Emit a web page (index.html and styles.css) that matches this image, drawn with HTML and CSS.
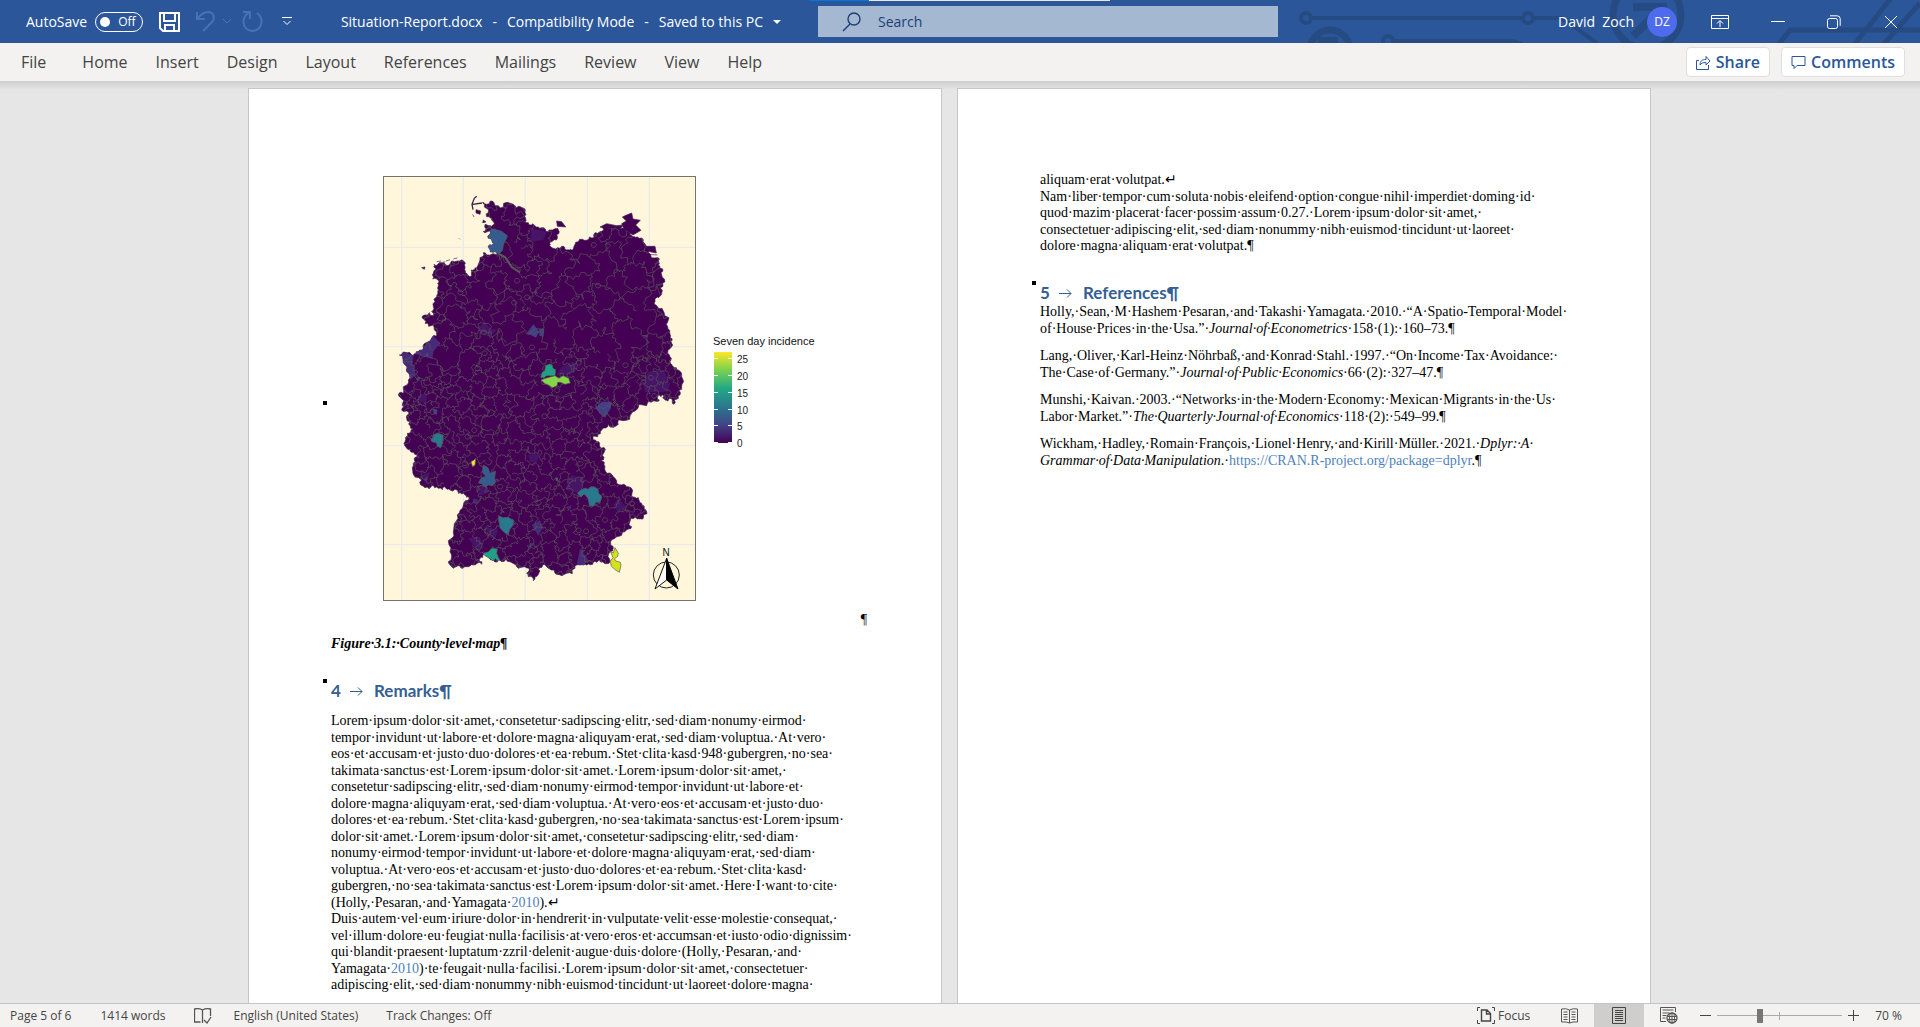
FILE: index.html
```html
<!DOCTYPE html>
<html lang="en">
<head>
<meta charset="utf-8">
<title>Situation-Report.docx</title>
<link rel="stylesheet" href="styles.css">
</head>
<body>
<header class="titlebar">
  <svg class="circuit" width="640" height="43" viewBox="0 0 640 43" fill="none" stroke="#264b82" stroke-width="4" aria-hidden="true">
    <circle cx="26" cy="18" r="5"/><path d="M32 18H242M254 18H282L317 43" /><circle cx="248" cy="18" r="5"/>
    <circle cx="50" cy="50" r="20" stroke-width="7"/><path d="M38 40h20" stroke-width="6"/>
    <circle cx="108" cy="41" r="5"/><path d="M114 41H230q8 0 12 4"/>
    <circle cx="367" cy="15" r="34" stroke-width="7"/><path d="M353 7h30v12M382 8l-29 28" stroke-width="8"/>
    <path d="M498 45l12-15h130M574 45l37-47M603 45l37-42" stroke-width="5"/>
  </svg>
  <div class="quick">
    <label class="autosave">AutoSave <button class="toggle" type="button"><i></i>Off</button></label>
    <button class="icon save" type="button" aria-label="Save"><svg width="21" height="20" viewBox="0 0 21 20" fill="none" stroke="#fff" stroke-width="2"><path d="M1 1h19v18H4l-3-3zM5 1v8h11V1M6 19v-6h9v6"/></svg></button>
    <button class="icon undo" type="button" aria-label="Undo"><svg width="36" height="21" viewBox="0 0 36 21" fill="none" stroke="#4673b3" stroke-width="2"><path d="M1 1v7h8M1 8C5 3 9 1 12 1c6 0 8 7 3 11l-8 8"/><path d="M27 8l4 4 4-4" stroke-width="1"/></svg></button>
    <button class="icon redo" type="button" aria-label="Repeat"><svg width="22" height="21" viewBox="0 0 22 21" fill="none" stroke="#4673b3" stroke-width="2"><path d="M1 1h7v7M8 1C-1 5-1 19 10 20c11-1 12-13 5-18"/></svg></button>
    <button class="icon more" type="button" aria-label="Customize toolbar"><svg width="10" height="9" viewBox="0 0 10 9" fill="none" stroke="#fff" stroke-width="1"><path d="M0 .5h10M1.500 4L5 7.500 8.500 4"/></svg></button>
  </div>
  <button class="docname" type="button"><span>Situation-Report.docx</span><span>-</span><span>Compatibility Mode</span><span>-</span><span>Saved to this PC</span><i></i></button>
  <div class="strip"></div>
  <label class="search"><svg width="20" height="20" viewBox="0 0 20 20" fill="none" stroke="#1c3f77" stroke-width="1.400"><circle cx="12" cy="7" r="6"/><path d="M8 12l-7 7"/></svg><input type="text" placeholder="Search" aria-label="Search"></label>
  <div class="account">
    <span class="user">David&nbsp; Zoch</span><span class="avatar">DZ</span>
    <button class="icon ribbonopt" type="button" aria-label="Ribbon display"><svg width="18" height="14" viewBox="0 0 18 14" fill="none" stroke="#fff"><path d="M.5.5h17v13H.5zM.5 3.500h17M9 12V6M6 8.500l3-3 3 3"/></svg></button>
    <button class="icon min" type="button" aria-label="Minimize"><svg width="14" height="14" viewBox="0 0 14 14" stroke="#fff"><path d="M0 6.500h14"/></svg></button>
    <button class="icon restore" type="button" aria-label="Restore"><svg width="14" height="14" viewBox="0 0 14 14" fill="none" stroke="#fff"><rect x=".5" y="3.500" width="10" height="10" rx="2"/><path d="M3 .8h7q3.200 0 3.200 3v7"/></svg></button>
    <button class="icon close" type="button" aria-label="Close"><svg width="14" height="14" viewBox="0 0 14 14" stroke="#fff"><path d="M1 1l12 12M13 1L1 13"/></svg></button>
  </div>
</header>
<nav class="ribbon">
  <a class="file" href="#">File</a><a href="#">Home</a><a href="#">Insert</a><a href="#">Design</a><a href="#">Layout</a><a href="#">References</a><a href="#">Mailings</a><a href="#">Review</a><a href="#">View</a><a href="#">Help</a>
  <button class="pill share" type="button"><svg width="15" height="15" viewBox="0 0 15 15" fill="none" stroke="#2b579a"><path d="M3 5.500H.5v9h12V10M4 10c0-4 2-5.500 6-5.500V1.500L14 6l-4 4V7.500C7 7.500 5 8 4 10z"/></svg>Share</button>
  <button class="pill" type="button"><svg width="15" height="15" viewBox="0 0 15 15" fill="none" stroke="#2b579a"><path d="M1 1.500h13v9H6l-3 3v-3H1z"/></svg>Comments</button>
</nav>
<main class="desk">
  <article class="page">
    <div class="figure">
      <i class="anchor"></i>
      <svg width="440" height="425" viewBox="0 0 440 425" role="img" aria-label="County level map">
        <defs>
          <clipPath id="land"><polygon class="coast" points="338,112 350,118 372,113 400,126 430,118 440,128 462,130 468,148 466,172 480,180 495,182 515,188 535,200 552,192 562,190 568,200 562,220 545,230 538,243 550,250 575,244 590,255 606,256 614,240 625,230 650,226 672,218 690,200 700,182 710,180 718,190 745,184 762,190 780,205 790,215 805,218 820,225 825,245 835,262 862,278 866,290 870,310 875,330 878,355 875,385 866,398 855,405 858,420 880,438 897,458 893,485 900,508 907,525 905,545 898,570 900,590 910,605 925,615 935,635 935,665 930,690 925,700 912,718 900,700 885,705 880,690 865,690 868,705 850,708 830,722 795,738 780,752 750,765 745,778 715,778 695,795 683,815 665,800 670,812 680,830 690,845 704,858 700,885 692,885 705,905 712,925 735,940 755,960 775,965 785,993 805,998 815,1015 822,1030 820,1060 810,1062 795,1057 780,1070 785,1085 765,1100 740,1115 722,1130 730,1150 722,1160 720,1190 700,1192 690,1185 670,1192 650,1200 630,1200 615,1210 590,1225 560,1228 550,1215 530,1205 508,1208 505,1228 490,1247 475,1235 478,1215 465,1205 440,1205 420,1190 395,1190 385,1185 365,1185 350,1175 340,1168 330,1180 320,1185 335,1190 335,1198 310,1200 290,1205 270,1203 250,1210 235,1190 240,1160 245,1120 252,1085 262,1050 280,1020 298,998 285,990 265,985 240,975 225,965 205,970 185,962 165,968 155,945 128,915 135,890 142,875 125,862 110,850 105,830 112,805 130,792 120,770 110,760 115,740 95,735 98,715 85,690 100,685 100,665 115,645 110,620 105,600 88,570 105,562 130,572 145,560 160,548 165,535 190,512 200,508 190,480 165,475 158,460 165,450 190,452 192,430 190,415 200,395 205,375 203,355 208,348 188,342 190,325 197,310 192,298 215,293 240,297 270,288 283,290 285,310 290,325 300,335 304,315 315,308 325,318 330,285 340,263 352,270 385,268 370,262 357,250 370,236 355,220 360,198 340,200 345,180 358,182 370,180 365,165 350,155 355,140 345,128"/></clipPath>
          <linearGradient id="viridis" x1="0" y1="1" x2="0" y2="0"><stop offset="0" stop-color="#440154"/><stop offset=".2" stop-color="#414487"/><stop offset=".4" stop-color="#2a788e"/><stop offset=".6" stop-color="#22a884"/><stop offset=".8" stop-color="#7ad151"/><stop offset="1" stop-color="#fde725"/></linearGradient>
        </defs>
        <rect x=".5" y=".5" width="312" height="424" fill="#fff6dc"/>
        <g transform="translate(-13 -11) scale(.33333)">
          <path stroke="#ebebeb" stroke-width="4" d="M95 36v1268M280 36v1268M466 36v1268M652 36v1268M838 36v1268M42 247h936M42 545h936M42 842h936M42 1139h936"/>
          <g fill="#440154" stroke="#3d2150" stroke-width="2">
            <path d="M560 168l15 2 12 16-25-2zM318 134l14 4-2 10-12-4zM340 165l8 6-10 2zM345 178l12 4-6 8zM308 148l4 8M356 150l8 12M200 290l14-2M228 288l12-4M250 282l12-3M155 308l10-2-2 7zM267 220l3 3M218 292l8-2"/>
            <path d="M309 134l-3-16 7-18 7-6M308 118l28-4" fill="none" stroke-width="4"/>
            <path d="M770 150l15-6 4 18 22 4-14 14 16 16-24 14-26-16-8-18 14-8-12-12zM818 232l12 12 25 0 4 20-30-6-12-12zM690 186l20-10 30 6 20-2-8 10-40 2zM832 268l30 2"/>
          </g>
          <polygon class="land coast"/>
          <g clip-path="url(#land)">
            <g class="county">
              <g fill="#481467"><path d="M325 488l20-18 15 20 20 5-20 20-30-10zM485 190l45 10-10 25-40 5zM575 605l35-15 20 15-30 25h-40zM820 655l15-35 45-5 20 40-5 25-70 2zM475 870l35-5-10 30-20-5zM150 935l30-15-10 35zM318 960h32l8 20-28 12zM590 950l15-20 40 15-15 40-40-10zM730 1020l15-20 23 25-23 20zM350 1085l35 10-10 25-25-5zM295 1120l35-5 10 30-15 15zM145 690l28-5-5 30-25-8z"/></g>
              <g fill="#472a79"><path d="M162 545l28-33 20 23-20 25-2 20-28-5-30-10zM88 570l17-8 25 10-2 23 10 35-18 15-15-45zM485 1080l25-15 8 25-13 22zM620 1200l10-50 25 35-15 17zM140 635l12 2-4 12-10-4zM310 1000l14 4-4 12-12-4zM590 1025l14-4-2 12z"/></g>
              <g fill="#433e85"><path d="M470 505l20-27 18 22-10 18-16-8zM508 495l14-3-2 23-12-3zM676 730l19-20h30l-3 20-17 28-15-13zM190 730l13 5-3 15-10-5zM476 1140l10-6-4 14z"/></g>
            </g>
            <path class="borders" fill="none" stroke="#5a5a5a" stroke-width="2"/>
            <g class="county" stroke="#5a5a5a" stroke-width="2">
              <path fill="#365c8d" d="M340 900l14 8 6 17 17-7-3 20 3 10-8 14-14-2-10 6-10-10-10-2 8-14 14-6-10-12zM370 192l15 4 10 3 17 13-3 10-6 8-3 12-3 15-8 8-14-2-17-5-5-15 4-7 12-2-6-10-7-4v-16l4-8z"/>
              <path fill="#2a788e" d="M183 822l7-4 1-9 12-5 17 7-2 20-6 18-10-6-3-10-14-3zM622 985l10-10 14-6 8 4 8-8 14 2 8 6 2 12 9 10-5 17-12 0-8 12-12-2-3-20-12-16-10 10zM385 1052l15 6 14-1 17 9-1 14-10 12-6 16-12-6-12-14zM556 938l8 2-4 8z"/>
              <path fill="#1fa187" d="M512 637l5-16 8-4 1-14 12-6 9 4 2 9 8 4-2 18-25 0-8 6zM340 1165l15-4 10-11 17 2-2 13 5 12 7 13-10-4-6-6-6 10-8-8-8 6-12-8z"/>
              <path fill="#86d549" d="M513 645l17-6 25-7 12 8 12-8 17 8 5 14-16 4-14-6-8 0-2 10-14 6-12-8-10-4z"/>
              <path fill="#fde725" d="M303 890l8-4 6-6-2 20-7 5z"/>
            </g>
            <path d="M385 266l20 10 20 30 25 16" fill="none" stroke="#5a5a5a" stroke-width="6"/>
          </g>
          <path fill="#d2e21b" stroke="#595959" stroke-width="2" d="M722 1160l8 4 5-16 10 17-2 9-10 8 4 6 14 4 2 8-5 22-10-6-14-12-3-16 8-10z"/>
          <circle cx="889" cy="1230" r="39" fill="none" stroke="#222" stroke-width="3"/>
          <path d="M890 1180l-35 92 35-27z" fill="#fff" stroke="#111" stroke-width="3"/><path d="M890 1180l34 92-34-27z" fill="#000" stroke="#000" stroke-width="3"/>
        </g>
        <rect x=".5" y=".5" width="312" height="424" fill="none" stroke="#73756b"/>
        <text x="283" y="380" text-anchor="middle" class="north">N</text>
        <text x="330" y="169" class="legend-title">Seven day incidence</text>
        <rect x="331" y="176" width="18" height="91" fill="url(#viridis)"/>
        <path stroke="#fff" d="M331 182.500h4M345 182.500h4M331 199.500h4M345 199.500h4M331 216.500h4M345 216.500h4M331 233.500h4M345 233.500h4M331 249.500h4M345 249.500h4M331 266.500h4M345 266.500h4"/>
        <g class="legend"><text x="354" y="187">25</text><text x="354" y="204">20</text><text x="354" y="221">15</text><text x="354" y="238">10</text><text x="354" y="254">5</text><text x="354" y="271">0</text></g>
      </svg>
      <span class="mark">¶</span>
    </div>
    <p class="caption">Figure·3.1:·County·level·map¶</p>
    <h2><i class="anchor"></i><span>4</span><svg width="14" height="12" viewBox="0 0 14 12" fill="none" stroke="#365f91"><path d="M0 6.500h12M8 2.500l4 4-4 4"/></svg>Remarks¶</h2>
    <p class="text remarks"><span>Lorem·ipsum·dolor·sit·amet,·consetetur·sadipscing·elitr,·sed·diam·nonumy·eirmod·</span><span>tempor·invidunt·ut·labore·et·dolore·magna·aliquyam·erat,·sed·diam·voluptua.·At·vero·</span><span>eos·et·accusam·et·justo·duo·dolores·et·ea·rebum.·Stet·clita·kasd·948·gubergren,·no·sea·</span><span>takimata·sanctus·est·Lorem·ipsum·dolor·sit·amet.·Lorem·ipsum·dolor·sit·amet,·</span><span>consetetur·sadipscing·elitr,·sed·diam·nonumy·eirmod·tempor·invidunt·ut·labore·et·</span><span>dolore·magna·aliquyam·erat,·sed·diam·voluptua.·At·vero·eos·et·accusam·et·justo·duo·</span><span>dolores·et·ea·rebum.·Stet·clita·kasd·gubergren,·no·sea·takimata·sanctus·est·Lorem·ipsum·</span><span>dolor·sit·amet.·Lorem·ipsum·dolor·sit·amet,·consetetur·sadipscing·elitr,·sed·diam·</span><span>nonumy·eirmod·tempor·invidunt·ut·labore·et·dolore·magna·aliquyam·erat,·sed·diam·</span><span>voluptua.·At·vero·eos·et·accusam·et·justo·duo·dolores·et·ea·rebum.·Stet·clita·kasd·</span><span>gubergren,·no·sea·takimata·sanctus·est·Lorem·ipsum·dolor·sit·amet.·Here·I·want·to·cite·</span><span>(Holly,·Pesaran,·and·Yamagata·<a href="#ref-holly">2010</a>).↵</span><span>Duis·autem·vel·eum·iriure·dolor·in·hendrerit·in·vulputate·velit·esse·molestie·consequat,·</span><span>vel·illum·dolore·eu·feugiat·nulla·facilisis·at·vero·eros·et·accumsan·et·iusto·odio·dignissim·</span><span>qui·blandit·praesent·luptatum·zzril·delenit·augue·duis·dolore·(Holly,·Pesaran,·and·</span><span>Yamagata·<a href="#ref-holly">2010</a>)·te·feugait·nulla·facilisi.·Lorem·ipsum·dolor·sit·amet,·consectetuer·</span><span>adipiscing·elit,·sed·diam·nonummy·nibh·euismod·tincidunt·ut·laoreet·dolore·magna·</span></p>
  </article>
  <article class="page next">
    <p class="text"><span>aliquam·erat·volutpat.↵</span><span>Nam·liber·tempor·cum·soluta·nobis·eleifend·option·congue·nihil·imperdiet·doming·id·</span><span>quod·mazim·placerat·facer·possim·assum·0.27.·Lorem·ipsum·dolor·sit·amet,·</span><span>consectetuer·adipiscing·elit,·sed·diam·nonummy·nibh·euismod·tincidunt·ut·laoreet·</span><span>dolore·magna·aliquam·erat·volutpat.¶</span></p>
    <h2><i class="anchor"></i><span>5</span><svg width="14" height="12" viewBox="0 0 14 12" fill="none" stroke="#365f91"><path d="M0 6.500h12M8 2.500l4 4-4 4"/></svg>References¶</h2>
    <div class="refs">
      <p class="text" id="ref-holly"><span>Holly,·Sean,·M·Hashem·Pesaran,·and·Takashi·Yamagata.·2010.·“A·Spatio-Temporal·Model·</span><span>of·House·Prices·in·the·Usa.”·<em>Journal·of·Econometrics</em>·158·(1):·160–73.¶</span></p>
      <p class="text"><span>Lang,·Oliver,·Karl-Heinz·Nöhrbaß,·and·Konrad·Stahl.·1997.·“On·Income·Tax·Avoidance:·</span><span>The·Case·of·Germany.”·<em>Journal·of·Public·Economics</em>·66·(2):·327–47.¶</span></p>
      <p class="text"><span>Munshi,·Kaivan.·2003.·“Networks·in·the·Modern·Economy:·Mexican·Migrants·in·the·Us·</span><span>Labor·Market.”·<em>The·Quarterly·Journal·of·Economics</em>·118·(2):·549–99.¶</span></p>
      <p class="text"><span>Wickham,·Hadley,·Romain·François,·Lionel·Henry,·and·Kirill·Müller.·2021.·<em>Dplyr:·A·</em></span><span><em>Grammar·of·Data·Manipulation</em>.·<a href="#">https://CRAN.R-project.org/package=dplyr</a>.¶</span></p>
    </div>
  </article>
</main>
<footer class="status">
  <span class="pageno">Page 5 of 6</span><span class="words">1414 words</span>
  <button class="icon proof" type="button" aria-label="Proofing"><svg width="18" height="16" viewBox="0 0 18 16" fill="none" stroke="#555"><path d="M8.500 13V2Q5 0 .5 1v13h6M8.500 2Q12 0 16.500 1v7M8.500 11v4M10 12l3 3 4-6" stroke-width="1.300"/></svg></button>
  <span class="lang">English (United States)</span><span>Track Changes: Off</span>
  <div class="views">
    <button class="focus" type="button"><svg width="18" height="17" viewBox="0 0 18 17" fill="none" stroke="#444"><path d="M3 .5H.5V4M15 .5h2.500V4M3 16.500H.5V13M15 16.500h2.500V13"/><path d="M4.500 3h5.500l3.500 3.500V14h-9zM9.500 3v4h4" stroke-width="1.400"/></svg>Focus</button>
    <button class="view" type="button" aria-label="Read mode"><svg width="17" height="16" viewBox="0 0 17 16" fill="none" stroke="#555"><path d="M8.500 15V2Q5 0 .5 1v13q5-.5 8 1 3-1.500 8-1V1q-4.500-1-8 1M2.500 4h4M2.500 6.500h4M2.500 9h4M2.500 11.500h4M10.500 4h4M10.500 6.500h4M10.500 9h4M10.500 11.500h4"/></svg></button>
    <button class="view on" type="button" aria-label="Print layout"><svg width="14" height="17" viewBox="0 0 14 17" fill="none" stroke="#444"><path d="M.5.5h13v16H.5zM3 3.500h8M3 5.500h8M3 7.500h8M3 9.500h8M3 11.500h8M3 13.500h8"/></svg></button>
    <button class="view" type="button" aria-label="Web layout"><svg width="18" height="17" viewBox="0 0 18 17" fill="none" stroke="#555"><path d="M6 14.500H.5V.5h15V5M2.500 3h11M2.500 6h7M2.500 8.500h4M2.500 11h3"/><circle cx="12" cy="11" r="5" stroke-width="1.300"/><path d="M12 6v10M7 9.500h10M7 12.500h10"/><ellipse cx="12" cy="11" rx="2.500" ry="5"/></svg></button>
    <button class="icon zoom" type="button" aria-label="Zoom out"><svg width="11" height="11" viewBox="0 0 11 11" stroke="#444"><path d="M0 5.500h11"/></svg></button>
    <input class="slider" type="range" min="0" max="119" value="40" aria-label="Zoom">
    <button class="icon zoom" type="button" aria-label="Zoom in"><svg width="11" height="11" viewBox="0 0 11 11" stroke="#444"><path d="M0 5.500h11M5.500 0v11"/></svg></button>
    <span class="percent">70 %</span>
  </div>
</footer>
<script src="map.js"></script>
</body>
</html>
```
FILE: styles.css
```css
* { box-sizing: border-box; }
body {
  margin: 0;
  height: 100vh;
  display: flex;
  flex-direction: column;
  overflow: hidden;
  font-family: "Open Sans", "Noto Sans", sans-serif;
  color: #444;
  background: #e6e6e6;
}
button { font: inherit; color: inherit; background: none; border: 0; padding: 0; white-space: nowrap; }
a { color: inherit; text-decoration: none; }
p, h2 { margin: 0; }
svg { display: block; flex: none; }
.icon { display: flex; align-items: center; }

/* Title bar */
.titlebar {
  position: relative;
  height: 43px;
  flex: none;
  display: grid;
  grid-template-columns: 818fr 460fr 642fr;
  align-items: center;
  grid-template-rows: 43px;
  background: #2b579a;
  color: #fff;
  font-size: 14px;
}
.circuit { position: absolute; right: 0; top: 0; }
.quick { grid-area: 1 / 1; display: flex; align-items: center; padding-left: 26px; }
.autosave { display: flex; align-items: center; gap: 8px; }
.toggle {
  width: 48px;
  height: 20px;
  display: flex;
  align-items: center;
  gap: 8px;
  padding-left: 4px;
  border: 1px solid #fff;
  border-radius: 10px;
  font-size: 12px;
}
.toggle i { width: 10px; height: 10px; border-radius: 50%; background: #fff; }
.save { margin-left: 16px; }
.undo { margin-left: 16px; }
.redo { margin-left: 10px; }
.more { margin-left: 18px; }
.docname {
  grid-area: 1 / 1;
  justify-self: end;
  margin-right: 37px;
  display: flex;
  align-items: center;
  gap: 10px;
}
.docname i { border: 4px solid transparent; border-top-color: #fff; border-bottom: 0; }
.strip {
  position: absolute;
  left: 809px;
  top: 0;
  width: 301px;
  height: 1px;
  background: linear-gradient(to right, #0078d4 60px, #ece9e0 60px);
}
.search {
  grid-area: 1 / 2;
  height: 31px;
  display: flex;
  align-items: center;
  gap: 16px;
  padding-left: 24px;
  background: #a5b8d1;
}
.search input { flex: 1; min-width: 0; border: 0; padding: 0; background: none; font: inherit; }
.search input::placeholder { color: #1c3f77; opacity: 1; }
.account { grid-area: 1 / 3; position: relative; display: flex; align-items: center; justify-content: flex-end; padding-right: 22px; }
.avatar {
  width: 30px;
  height: 30px;
  margin: 0 34px 0 13px;
  border-radius: 50%;
  background: #4f6bed;
  font-size: 12px;
  line-height: 30px;
  text-align: center;
}
.min { margin-left: 42px; }
.restore { margin-left: 42px; }
.close { margin-left: 43px; }

/* Ribbon tabs */
.ribbon {
  height: 38px;
  flex: none;
  display: flex;
  align-items: center;
  gap: 28px;
  padding: 0 15px 0 21px;
  background: #f3f2f1;
  font-size: 16px;
}
.file { margin-right: 8px; }
.pill {
  display: flex;
  align-items: center;
  gap: 5px;
  height: 30px;
  padding: 0 9px;
  margin-left: -17px;
  border: 1px solid #e1dfdd;
  border-radius: 4px;
  background: #fff;
  color: #2b579a;
  font-weight: 600;
}
.share { margin-left: auto; }

/* Document */
.desk {
  flex: 1;
  min-height: 0;
  display: flex;
  justify-content: center;
  gap: 15px;
  padding: 7px 21px 0 0;
  overflow: hidden;
  background: linear-gradient(#cecece, #e6e6e6 9px);
}
.page {
  flex: 0 1 694px;
  min-width: 0;
  padding: 87px 74px 0 82px;
  border: 1px solid #c6c6c6;
  border-bottom: 0;
  background: #fff;
  color: #000;
  font-family: "Liberation Serif", serif;
  font-size: 14px;
  line-height: 16px;
}
.next { padding-top: 83px; }
.page a { color: #4f81bd; }
.figure { position: relative; display: flex; justify-content: space-between; align-items: flex-end; padding-left: 52px; }
.figure svg { margin-bottom: 29px; }
.mark { margin-bottom: 2px; }
.anchor { position: absolute; left: -8px; top: -1px; width: 4px; height: 4px; background: #000; }
.figure .anchor { top: 225px; }
.caption { margin-top: 6px; font-weight: bold; font-style: italic; }
h2 {
  position: relative;
  display: flex;
  align-items: center;
  margin-top: 28px;
  font: bold 17px/22px Lato, sans-serif;
  color: #365f91;
}
h2 span { width: 19px; }
h2 svg { margin-right: 10px; }
.text span { display: block; white-space: nowrap; }
.text span:nth-child(even) { line-height: 17px; }
.remarks { margin-top: 11px; }
.refs { display: flex; flex-direction: column; gap: 11px; }

.legend-title { font: 11px "Liberation Sans", sans-serif; fill: #111; }
.legend { font: 10px "Liberation Sans", sans-serif; fill: #222; }
.north { font: 10px "Liberation Sans", sans-serif; fill: #111; }
.land { fill: #440154; stroke: #3d2150; stroke-width: 2; }

/* Status bar */
.status {
  height: 24px;
  flex: none;
  display: flex;
  align-items: center;
  padding-left: 10px;
  border-top: 1px solid #c6c4c2;
  background: #f3f2f1;
  font-size: 12px;
  white-space: nowrap;
}
.words { margin: 0 28px 0 29px; }
.lang { margin: 0 28px 0 22px; }
.views { height: 100%; margin-left: auto; padding-right: 18px; display: flex; align-items: center; }
.focus { display: flex; align-items: center; gap: 3px; margin-right: 14px; }
.view { width: 50px; height: 100%; display: flex; align-items: center; justify-content: center; }
.view.on { background: #cfcecd; }
.zoom { margin: 0 6px; }
.slider {
  appearance: none;
  width: 125px;
  height: 14px;
  margin: 0;
  background:
    linear-gradient(#aaa, #aaa) 62px 50% / 1px 8px no-repeat,
    linear-gradient(#aaa, #aaa) 0 50% / 100% 1px no-repeat;
}
.slider::-webkit-slider-thumb { appearance: none; width: 6px; height: 14px; background: #777; }
.percent { margin-left: 10px; }
```
FILE: map.js
```js
// Draws the irregular coast and the county borders of the incidence map.
let seed = 7;
const random = () => {
  seed = (seed * 1664525 + 1013904223) % 4294967296;
  return seed / 4294967296;
};

// Splits a segment repeatedly, pushing each midpoint off the line.
function rough(a, b, depth, amount) {
  if (depth === 0) return [b];
  const k = (random() - 0.5) * amount;
  const m = [(a[0] + b[0]) / 2 + (b[1] - a[1]) * k, (a[1] + b[1]) / 2 - (b[0] - a[0]) * k];
  return [...rough(a, m, depth - 1, amount), ...rough(m, b, depth - 1, amount)];
}

const coasts = document.querySelectorAll('.coast');
const outline = coasts[0].getAttribute('points').split(' ').map(p => p.split(',').map(Number));
const coast = outline.flatMap((p, i) => rough(p, outline[(i + 1) % outline.length], 2, 0.7));
coasts.forEach(c => c.setAttribute('points', coast.map(p => p.map(Math.round).join()).join(' ')));

// Counties are small in the Ruhr area and the south, large in the north-east.
function spacing(x, y) {
  if (x < 260 && y > 590 && y < 760) return 15;
  if (x > 530 && y < 520) return 45;
  if (y < 560) return 31;
  return 21;
}
const sites = [];
for (let n = 0; n < 2200; n++) {
  const x = 60 + random() * 900, y = 90 + random() * 1180, r = spacing(x, y);
  if (sites.every(s => Math.hypot(s[0] - x, s[1] - y) > r)) sites.push([x, y]);
}

let d = '';
sites.forEach((s, i) => {
  let cell = [[-1e3, -1e3, -1], [2e3, -1e3, -1], [2e3, 2e3, -1], [-1e3, 2e3, -1]];
  sites.forEach((t, j) => {
    if (i === j || Math.hypot(t[0] - s[0], t[1] - s[1]) > 200) return;
    const nx = t[0] - s[0], ny = t[1] - s[1];
    const c = (nx * (t[0] + s[0]) + ny * (t[1] + s[1])) / 2;
    const side = p => p[0] * nx + p[1] * ny - c;
    const next = [];
    cell.forEach((p, k) => {
      const q = cell[(k + 1) % cell.length], a = side(p), b = side(q);
      const u = a / (a - b), cut = [p[0] + (q[0] - p[0]) * u, p[1] + (q[1] - p[1]) * u];
      if (a <= 0) next.push(p);
      if (a <= 0 && b > 0) next.push([...cut, j]);
      if (a > 0 && b <= 0) next.push([...cut, p[2]]);
    });
    cell = next;
  });
  cell.forEach((p, k) => {
    if (p[2] < i || random() < 0.14) return;
    const q = cell[(k + 1) % cell.length];
    d += 'M' + [p, ...rough(p, q, 3, 1.1)].map(v => v[0].toFixed(1) + ' ' + v[1].toFixed(1)).join('L');
  });
  if (random() < 0.06) d += `M${s[0] - 7} ${s[1]}l4 -7 8 0 5 6 -4 7 -8 1z`;
});
document.querySelector('.borders').setAttribute('d', d);
```
